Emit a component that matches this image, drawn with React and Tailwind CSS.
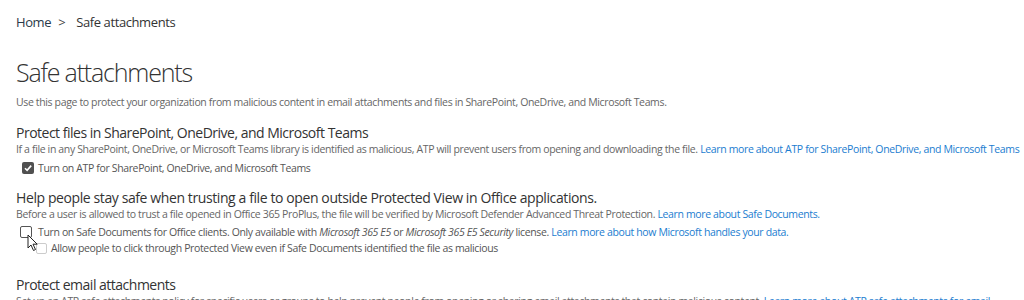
import React from "react";

const F = { fontFamily: '"Open Sans", "Noto Sans", Arial, sans-serif' };

function Checked() {
  return (
    <span className="inline-flex w-[12px] h-[12px] rounded-[2px] bg-[#505050] items-center justify-center shrink-0">
      <svg width="10" height="10" viewBox="0 0 10 10">
        <path d="M2 5.2 L4.1 7.3 L8.2 2.6" fill="none" stroke="#fff" strokeWidth="1.6" />
      </svg>
    </span>
  );
}

function Link({ children }) {
  return <span className="text-[#1b7dd0]">{children}</span>;
}

const body = "text-[10.5px] leading-[14px] tracking-[-0.36px]";
const head = "text-[14px] leading-[18px] text-[#333]";

export default function App() {
  return (
    <div className="w-[1024px] h-[300px] overflow-hidden bg-white relative" style={F}>
      <div className="pl-[16px]">
        <div className="pt-[8px] h-[35px] flex items-center gap-[7px] text-[13px] text-[#333] leading-[18px] tracking-[-0.4px]">
          <span className="text-[#2a3a4a]">Home</span>
          <span className="text-[#444]">&gt;</span>
          <span className="text-[#333] ml-[4px]">Safe attachments</span>
        </div>
        <div className="mt-[20px] text-[25px] font-light leading-[34px] text-[#333] tracking-[-1.2px]">Safe attachments</div>
        <div className={`mt-[6px] ${body} text-[#666]`}>
          Use this page to protect your organization from malicious content in email attachments and files in SharePoint, OneDrive, and Microsoft Teams.
        </div>

        <div className={`mt-[15px] ${head} tracking-[-0.5px]`}>Protect files in SharePoint, OneDrive, and Microsoft Teams</div>
        <div className={`${body} text-[#666] whitespace-nowrap`}>
          If a file in any SharePoint, OneDrive, or Microsoft Teams library is identified as malicious, ATP will prevent users from opening and downloading the file. <Link>Learn more about ATP for SharePoint, OneDrive, and Microsoft Teams</Link>
        </div>
        <div className={`mt-[5px] pl-[6px] flex items-center gap-[4px] ${body} text-[#555]`}>
          <Checked />
          <span>Turn on ATP for SharePoint, OneDrive, and Microsoft Teams</span>
        </div>

        <div className={`mt-[14px] ${head} tracking-[-0.4px]`}>Help people stay safe when trusting a file to open outside Protected View in Office applications.</div>
        <div className={`${body} text-[#666]`}>
          Before a user is allowed to trust a file opened in Office 365 ProPlus, the file will be verified by Microsoft Defender Advanced Threat Protection. <Link>Learn more about Safe Documents.</Link>
        </div>
        <div className={`mt-[4px] pl-[4px] flex items-center gap-[6px] ${body} tracking-[-0.3px] text-[#555]`}>
          <span className="w-[12px] h-[12px] rounded-[2px] border border-[#555] bg-white shrink-0" />
          <span>
            Turn on Safe Documents for Office clients. Only available with <i>Microsoft 365 E5</i> or <i>Microsoft 365 E5 Security</i> license. <Link>Learn more about how Microsoft handles your data.</Link>
          </span>
        </div>
        <div className={`mt-[2px] pl-[20px] flex items-center gap-[4px] ${body} text-[#555]`}>
          <span className="w-[11px] h-[11px] rounded-[2px] border border-[#ccc] bg-white shrink-0" />
          <span>Allow people to click through Protected View even if Safe Documents identified the file as malicious</span>
        </div>

        <div className={`mt-[21px] ${head} tracking-[-0.5px]`}>Protect email attachments</div>
        <div className={`${body} text-[#666] whitespace-nowrap`}>
          Set up an ATP safe attachments policy for specific users or groups to help prevent people from opening or sharing email attachments that contain malicious content. <Link>Learn more about ATP safe attachments for email</Link>
        </div>
      </div>

      <svg className="absolute left-[27px] top-[234px]" width="12" height="18" viewBox="0 0 12 18">
        <path d="M1 1 L1 14 L4 11 L6.5 16.5 L8.5 15.5 L6 10.2 L10.2 10.2 Z" fill="#fff" stroke="#222" strokeWidth="1" strokeLinejoin="round" />
      </svg>
    </div>
  );
}
